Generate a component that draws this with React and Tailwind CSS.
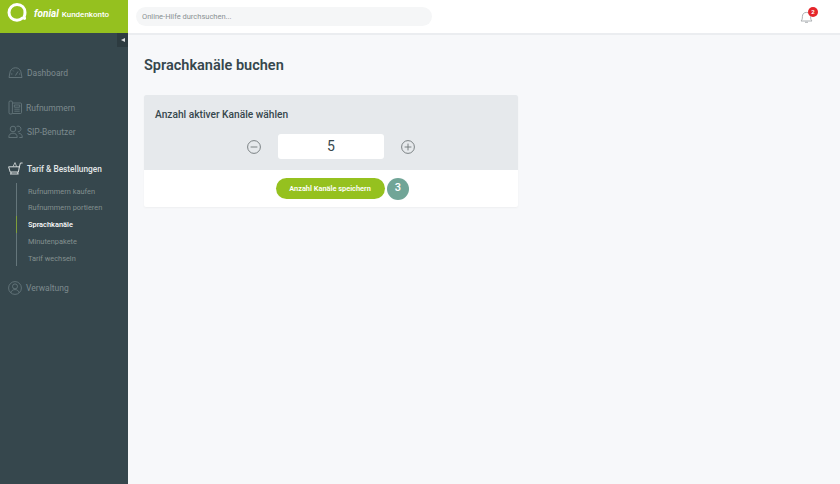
const font = { fontFamily: 'Roboto, "Noto Sans", sans-serif' };

function Logo() {
  return (
    <svg width="22" height="22" viewBox="0 0 22 22" fill="none" className="mt-[2px] shrink-0 self-start">
      <path d="M11 2.600c4.800 0 8 3.300 8 8 0 1.600-.3 3-.9 4.100l.5 1.700-1.900-.5c-1.400 1.200-3.300 2.300-5.700 2.300-4.800 0-8-3.300-8-7.600s3.200-8 8-8Z" stroke="#fff" strokeWidth="3" strokeLinejoin="round" />
    </svg>
  );
}

const iconCls = "shrink-0 text-[#6b7c81]";

function Gauge() {
  return (
    <svg width="15" height="15" viewBox="0 0 15 15" fill="none" stroke="currentColor" strokeWidth=".8" className={iconCls}>
      <path d="M1 12.500 2.200 6.500C3.200 4 5 2.800 7.500 2.800s4.300 1.200 5.300 3.700L14 12.500Z" />
      <path d="M7.500 10.500 10 6.500M3 9h1.400M11 9h1.200M5 5.500l.6.8" />
    </svg>
  );
}
function Phone() {
  return (
    <svg width="14" height="15" viewBox="0 0 14 15" fill="none" stroke="currentColor" strokeWidth=".8" className={iconCls}>
      <rect x="1" y="1" width="3.400" height="13" rx="1.200" />
      <path d="M4.400 3h8.100a1 1 0 0 1 1 1v8.500a1 1 0 0 1-1 1H4.400" />
      <path d="M6.300 5h5.400v2.200H6.300ZM6.300 9.200h5.400M6.300 11.200h5.400" />
    </svg>
  );
}
function Users() {
  return (
    <svg width="15" height="15" viewBox="0 0 15 15" fill="none" stroke="currentColor" strokeWidth=".8" className={iconCls}>
      <circle cx="5" cy="5" r="2.800" />
      <path d="M.8 13.500c0-3 1.500-4.300 4.200-4.300s4.200 1.300 4.200 4.300Z" />
      <path d="M8.600 2.600a2.800 2.800 0 1 1 1.200 5.100M10.600 9.200c2.300.2 3.700 1.500 3.700 4.300h-3" />
    </svg>
  );
}
function Cart() {
  return (
    <svg width="15" height="16" viewBox="0 0 15 16" fill="none" stroke="#d5dadb" strokeWidth="1" className="shrink-0">
      <path d="M.6 5.800h10.800l-1 5.200H2.200Z" />
      <path d="M11.200 6.500 12.400 2h2.200M3 11v2M9.800 11v2" />
      <path d="M2 13h8.600" />
      <path d="m5 5.600 2-4 1.600 4" strokeWidth=".8" />
    </svg>
  );
}
function User() {
  return (
    <svg width="14" height="14" viewBox="0 0 14 14" fill="none" stroke="currentColor" strokeWidth=".8" className={iconCls}>
      <circle cx="7" cy="7" r="6.400" />
      <circle cx="7" cy="5.400" r="2.500" />
      <path d="M3 11.600c.4-2 2-3 4-3s3.600 1 4 3" />
    </svg>
  );
}
function RoundSign({ plus }) {
  return (
    <svg width="14" height="14" viewBox="0 0 14 14" fill="none" stroke="#6f7678" strokeWidth=".9">
      <circle cx="7" cy="7" r="6.400" />
      <path d="M3.600 7h6.800" />
      {plus && <path d="M7 3.600v6.800" />}
    </svg>
  );
}

function NavItem({ icon, label, className }) {
  return (
    <div className={`flex items-center gap-[4px] pl-2 text-[8.500px] text-[#7d8a8e] ${className}`}>
      {icon}
      <span className="leading-3">{label}</span>
    </div>
  );
}

export default function App() {
  const subs = ["Rufnummern kaufen", "Rufnummern portieren", "Sprachkanäle", "Minutenpakete", "Tarif wechseln"];
  return (
    <div style={font} className="flex h-[484px] w-[840px] overflow-hidden bg-[#f7f8fa]">
      <aside className="flex w-[128px] shrink-0 flex-col bg-[#36474d]">
        <div className="flex h-[33px] items-center gap-[6px] bg-[#95c11f] pl-[6px] pb-[4px]">
          <Logo />
          <div className="flex items-baseline gap-[3px] text-white">
            <span className="text-[10px] font-bold italic leading-3">fonial</span>
            <span className="text-[8px] font-medium leading-3">Kundenkonto</span>
          </div>
        </div>
        <div className="flex justify-end">
          <div className="flex h-[14px] w-[11px] items-center justify-center bg-[#2d3b40]">
            <div className="h-0 w-0 border-y-[2.500px] border-r-[4px] border-y-transparent border-r-[#d8dcdd]" />
          </div>
        </div>
        <NavItem className="mt-[18px]" icon={<Gauge />} label="Dashboard" />
        <NavItem className="mt-[20px]" icon={<Phone />} label="Rufnummern" />
        <NavItem className="mt-[9px]" icon={<Users />} label="SIP-Benutzer" />
        <div className="mt-[22px] flex items-center gap-[4px] pl-2 text-[8.300px] font-medium text-[#e4e8e9]">
          <Cart />
          <span className="leading-3">Tarif & Bestellungen</span>
        </div>
        <div className="ml-[16px] mt-[6px] flex flex-col border-l border-[#65767b]">
          {subs.map((s) => (
            <div
              key={s}
              className={`-ml-px flex h-[16.700px] items-center border-l pl-[11px] text-[7.400px] ${s === "Sprachkanäle" ? "border-[#7f9f3a] font-medium text-white" : "border-transparent text-[#84908f]"}`}
            >
              {s}
            </div>
          ))}
        </div>
        <NavItem className="mt-[15px]" icon={<User />} label="Verwaltung" />
      </aside>

      <div className="flex min-w-0 flex-1 flex-col">
        <header className="flex h-[35px] shrink-0 items-center justify-between border-b-2 border-[#ebedf0] bg-white pl-[8px] pr-[27px]">
          <div className="flex h-[19px] w-[296px] items-center rounded-full bg-[#f5f6f7] pl-[6px] text-[7.500px] text-[#8a9193]">
            Online-Hilfe durchsuchen...
          </div>
          <div className="relative h-[14px] w-[13px]">
            <svg width="13" height="14" viewBox="0 0 13 14" fill="none" stroke="#9aa0a2" strokeWidth=".8">
              <path d="M1 11c1-1 1.400-2 1.400-4.500C2.400 4 4 2.400 6.500 2.400S10.600 4 10.600 6.500c0 2.500.4 3.500 1.400 4.500Z" />
              <path d="M5 12.300h3" />
            </svg>
            <div className="absolute -right-[5px] -top-[3px] flex h-[10px] w-[10px] items-center justify-center rounded-full bg-[#e5262b] text-[6px] font-bold leading-none text-white">
              2
            </div>
          </div>
        </header>

        <main className="pl-[16px]">
          <h1 className="mt-[21px] text-[14.500px] font-semibold leading-5 text-[#36474d]">Sprachkanäle buchen</h1>
          <section className="mt-[19px] w-[374px] rounded-[2px] bg-white shadow-[0_1px_2px_rgba(0,0,0,0.04)]">
            <div className="h-[75px] rounded-t-[2px] bg-[#e6e9ec] px-[11px] pt-[12px]">
              <h2 className="text-[10.200px] font-medium leading-[15px] text-[#36474d]">Anzahl aktiver Kanäle wählen</h2>
              <div className="mt-[12px] flex items-center justify-center gap-[17px]">
                <RoundSign />
                <div className="flex h-[25px] w-[106px] items-center justify-center rounded-[3px] bg-white text-[14px] text-[#36474d]">5</div>
                <RoundSign plus />
              </div>
            </div>
            <div className="flex h-[37px] items-center justify-center gap-[2px] pl-[22px]">
              <button className="flex h-[21px] w-[109px] items-center justify-center rounded-full bg-[#95c11f] text-[7.400px] font-semibold text-white">
                Anzahl Kanäle speichern
              </button>
              <div className="flex h-[22px] w-[22px] items-center justify-center rounded-full bg-[#71a597] pl-[1px] text-[11px] font-medium text-white">3</div>
            </div>
          </section>
        </main>
      </div>
    </div>
  );
}
